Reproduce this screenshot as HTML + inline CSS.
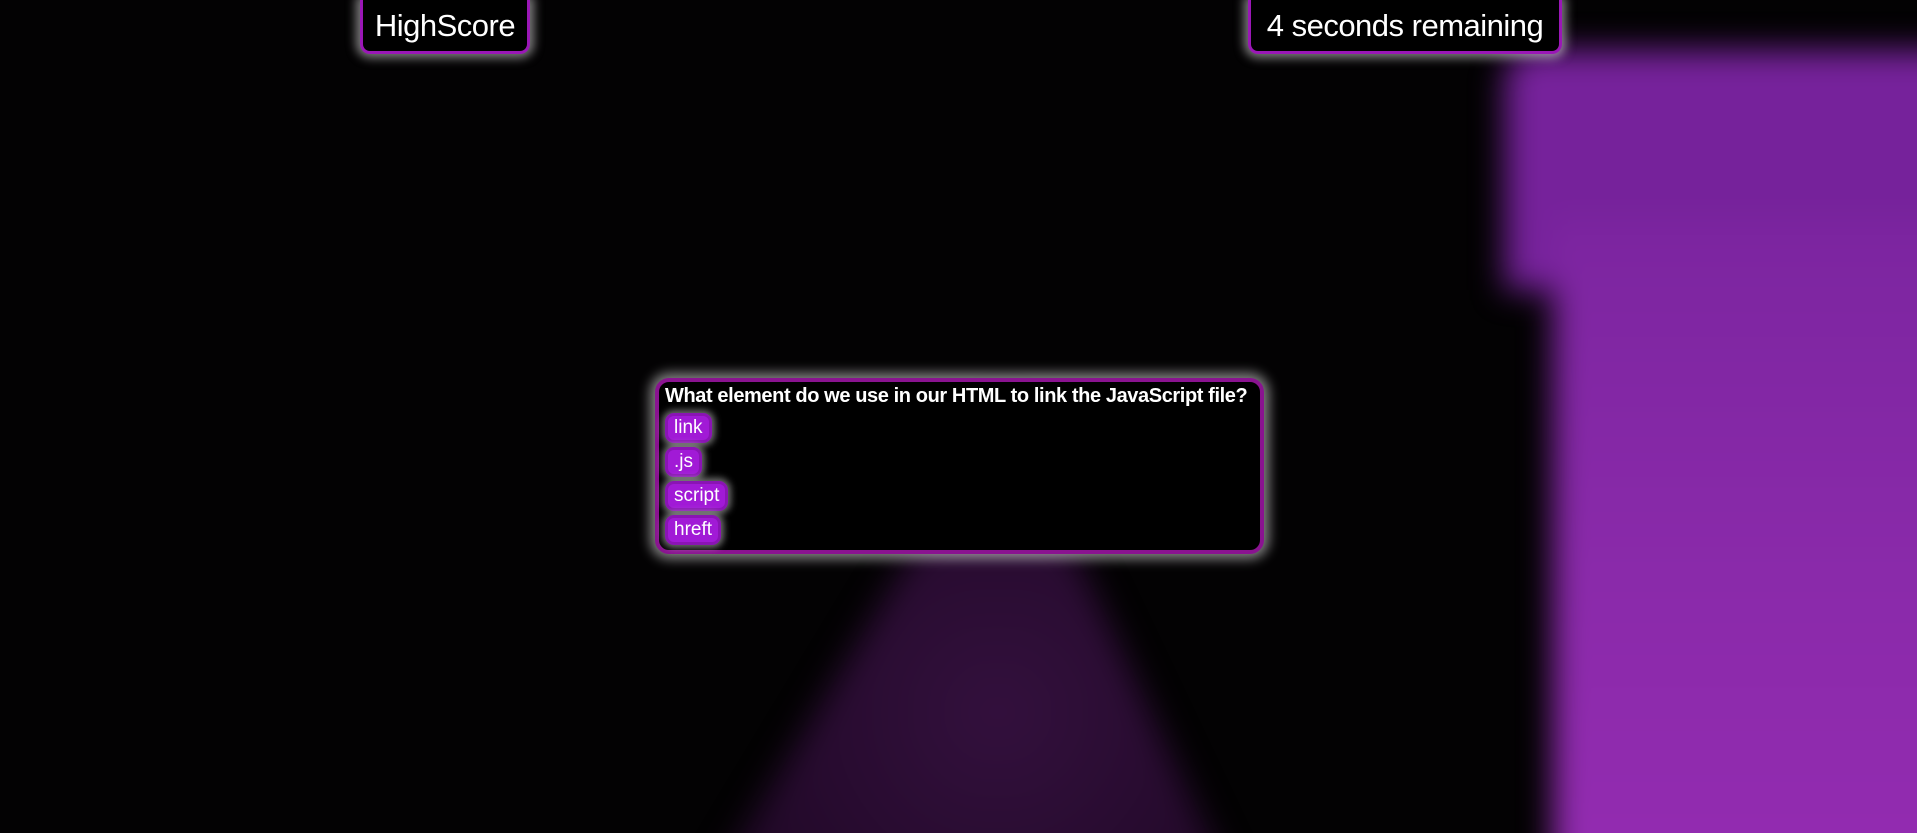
<!DOCTYPE html>
<html><head><style>
html,body{margin:0;padding:0;overflow:hidden;width:1917px;height:833px}
body{background:#030203;position:relative;font-family:"Liberation Sans",sans-serif;color:#fff}
.clip{position:absolute;left:0;top:0;width:1917px;height:833px;overflow:hidden}
.blur{position:absolute;left:0;top:0;width:1917px;height:833px;filter:blur(16px)}
.pa{position:absolute;left:1505px;top:50px;width:500px;height:240px;background:#76229b;border-radius:30px 0 0 0}
.pb{position:absolute;left:1553px;top:220px;width:450px;height:700px;background:linear-gradient(#7c25a0,#8a2aaa 50%,#952cb2)}
.tri{position:absolute;left:690px;top:400px;width:560px;height:520px;background:radial-gradient(ellipse at 55% 60%,#33103d,#1e0724 75%);clip-path:polygon(56% 0,100% 100%,0 100%)}
.box{position:absolute;background:#000;border:3px solid #9a17b6;border-top:none;border-radius:0 0 10px 10px;box-shadow:0 0 10px 4px rgba(230,230,230,.55);font-size:31px;line-height:52px;text-align:center;letter-spacing:-0.5px}
.quiz{position:absolute;left:655px;top:378px;width:601px;height:168px;background:#000;border:4px solid #8a1390;border-radius:14px;box-shadow:0 0 12px 5px rgba(220,220,220,.6)}
.q{position:absolute;left:6px;top:3px;font-size:20px;font-weight:bold;letter-spacing:-0.4px;white-space:nowrap}
.a{position:absolute;left:6px;height:24px;background:#a11ad6;border:3px solid #8a14b4;border-radius:9px;font-size:19px;line-height:24px;padding:0 6px;box-shadow:0 0 7px 3px rgba(220,220,220,.5)}
</style></head><body>
<div class="clip"><div class="blur"><div class="pa"></div><div class="pb"></div><div class="tri"></div></div></div>
<div class="box" style="left:360px;top:0;width:164px;height:51px">HighScore</div>
<div class="box" style="left:1248px;top:0;width:308px;height:51px">4 seconds remaining</div>
<div class="quiz">
<div class="q">What element do we use in our HTML to link the JavaScript file?</div>
<div class="a" style="top:31px">link</div>
<div class="a" style="top:65px">.js</div>
<div class="a" style="top:99px">script</div>
<div class="a" style="top:133px">hreft</div>
</div>
</body></html>
